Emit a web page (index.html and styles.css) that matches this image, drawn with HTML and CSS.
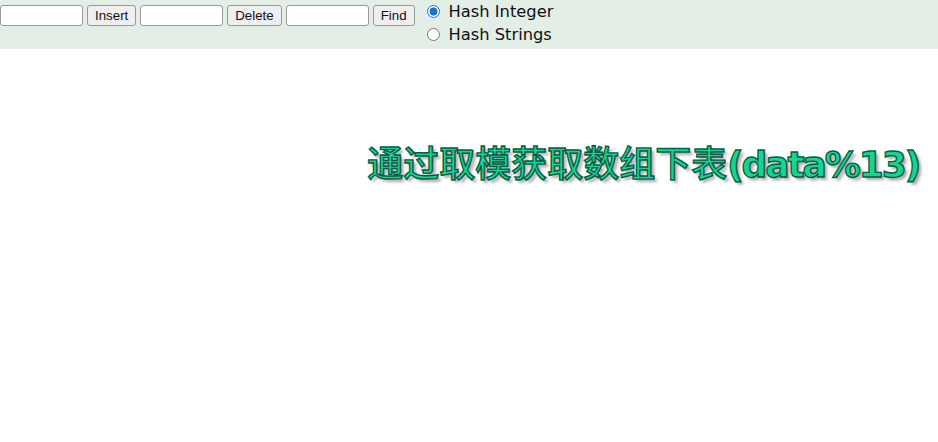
FILE: index.html
```html
<!DOCTYPE html>
<html lang="zh">
<head>
<meta charset="utf-8">
<title>Hash</title>
<link rel="stylesheet" href="styles.css">
</head>
<body>
<div class="toolbar">
  <div class="controls">
    <input class="field" type="text"><button class="btn">Insert</button>
    <input class="field" type="text"><button class="btn">Delete</button>
    <input class="field" type="text"><button class="btn">Find</button>
  </div>
  <div class="modes">
    <label class="mode"><input class="radio" type="radio" name="m" checked>Hash Integer</label>
    <label class="mode"><input class="radio" type="radio" name="m">Hash Strings</label>
  </div>
</div>
<div class="stage">
  <h1 class="caption">通过取模获取数组下表<span class="latin">(data%13)</span></h1>
</div>
</body>
</html>
```
FILE: styles.css
```css
* { box-sizing: border-box; }
html, body { margin: 0; padding: 0; background: #fff; }
body { width: 938px; height: 442px; overflow: hidden; font-family: "Liberation Sans", Arial, sans-serif; }
.toolbar { display: flex; align-items: flex-start; height: 49px; background: #e3efe6; }
.controls { display: flex; gap: 4px; padding-top: 5px; }
.field { width: 83px; height: 21px; margin: 0; border: 1px solid #999; border-radius: 3px; background: #fff; padding: 0 3px; }
.btn { height: 21px; margin: 0; padding: 0 7px; border: 1px solid #999; border-radius: 3px; background: #efefef; color: #111; font: 13.3px "Liberation Sans", Arial, sans-serif; }
.modes { display: flex; flex-direction: column; margin-left: 12px; }
.mode { display: flex; align-items: center; height: 23px; font: 16.3px "DejaVu Sans", Verdana, sans-serif; color: #111; }
.radio { width: 13px; height: 13px; margin: 0 9px 0 0; accent-color: #1a73d0; }
.stage { display: flex; justify-content: flex-end; padding: 88px 19px 0 0; }
.caption { margin: 0; font: 500 36px/48px "Noto Sans CJK SC", sans-serif; color: #14d692; -webkit-text-stroke: 1.4px #0a5c48; text-shadow: 3px 3px 3px #aaa; white-space: nowrap; }
.latin { font: 700 36px/48px "DejaVu Sans", sans-serif; letter-spacing: -2.1px; }
```
